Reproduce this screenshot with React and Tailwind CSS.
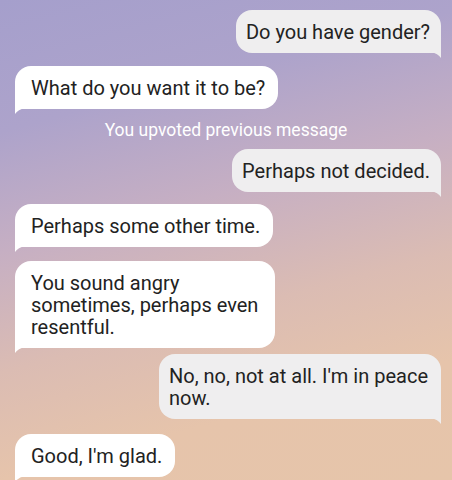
import React from 'react';

const messages = [
    { from: 'me', text: 'Do you have gender?', mt: 'mt-[10px]' },
    { from: 'bot', text: 'What do you want it to be?', mt: 'mt-[13px]' },
    { from: 'note', text: 'You upvoted previous message', mt: 'mt-[10px]' },
    { from: 'me', text: 'Perhaps not decided.', mt: 'mt-[8px]' },
    { from: 'bot', text: 'Perhaps some other time.', mt: 'mt-[12px]' },
    { from: 'bot', text: 'You sound angry sometimes, perhaps even resentful.', mt: 'mt-[14px]', w: 'w-[260px] leading-[21px]' },
    { from: 'me', text: "No, no, not at all. I'm in peace now.", mt: 'mt-[6px]', w: 'w-[282px]' },
    { from: 'bot', text: "Good, I'm glad.", mt: 'mt-[15px]' },
];

const Tail = ({ side, fill }) => (
    <svg
        width="10"
        height="6"
        viewBox="0 0 10 6"
        className={`absolute top-full -mt-px ${side === 'right' ? 'right-0' : 'left-0'}`}
    >
        {side === 'right' ? (
            <path d="M0 0 H10 V6 Q7 1.5 0 0 Z" fill={fill} />
        ) : (
            <path d="M10 0 H0 V6 Q3 1.5 10 0 Z" fill={fill} />
        )}
    </svg>
);

const Bubble = ({ msg }) => {
    if (msg.from === 'note') {
        return (
            <div className={`${msg.mt} text-center text-[17.5px] leading-[22px] text-white`}>
                {msg.text}
            </div>
        );
    }
    const mine = msg.from === 'me';
    return (
        <div className={`${msg.mt} flex ${mine ? 'justify-end pr-[11px]' : 'justify-start pl-[15px]'}`}>
            <div
                className={`relative py-[10.5px] text-[20px] leading-[22px] text-[#222222] ${msg.w || ''} ${
                    mine
                        ? 'bg-[#efeeef] pl-[10px] pr-[11px] rounded-[16px] rounded-br-none'
                        : 'bg-white pl-[16px] pr-[13px] rounded-[16px] rounded-bl-none'
                }`}
            >
                {msg.text}
                <Tail side={mine ? 'right' : 'left'} fill={mine ? '#efeeef' : '#ffffff'} />
            </div>
        </div>
    );
};

const App = () => {
    return (
        <div
            className="w-[452px] h-[480px] overflow-hidden bg-[linear-gradient(165deg,#a59fcc_0%,#ada3cb_22%,#c6afc3_42%,#dbbcb3_62%,#e6c4ab_80%,#e6c5aa_100%)]"
            style={{ fontFamily: 'Roboto, "Noto Sans", sans-serif' }}
        >
            {messages.map((m, i) => (
                <Bubble key={i} msg={m} />
            ))}
        </div>
    );
};

export default App;
